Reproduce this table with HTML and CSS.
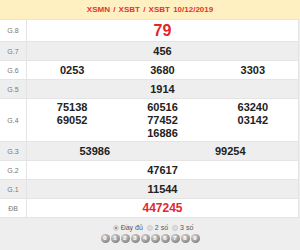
FILE: index.html
```html
<!DOCTYPE html>
<html>
<head>
<meta charset="utf-8">
<link rel="stylesheet" href="styles.css">
</head>
<body>
<div class="box">
  <div class="head">XSMN / XSBT / XSBT 10/12/2019</div>
  <table class="kq">
    <tr class="r8"><th>G.8</th><td><div class="cells"><span class="big red">79</span></div></td></tr>
    <tr class="alt"><th>G.7</th><td><div class="cells"><span>456</span></div></td></tr>
    <tr><th>G.6</th><td><div class="cells"><span>0253</span><span>3680</span><span>3303</span></div></td></tr>
    <tr class="alt"><th>G.5</th><td><div class="cells"><span>1914</span></div></td></tr>
    <tr class="r4"><th>G.4</th><td><div class="cells"><span class="col"><b>75138</b><b>69052</b></span><span class="col"><b>60516</b><b>77452</b><b>16886</b></span><span class="col"><b>63240</b><b>03142</b></span></div></td></tr>
    <tr class="alt"><th>G.3</th><td><div class="cells"><span>53986</span><span>99254</span></div></td></tr>
    <tr><th>G.2</th><td><div class="cells"><span>47617</span></div></td></tr>
    <tr class="alt"><th>G.1</th><td><div class="cells"><span>11544</span></div></td></tr>
    <tr class="db"><th>ĐB</th><td><div class="cells"><span class="red">447245</span></div></td></tr>
  </table>
  <div class="foot">
    <div class="opts">
      <label><i class="radio on"></i>Đầy đủ</label>
      <label><i class="radio"></i>2 số</label>
      <label><i class="radio"></i>3 số</label>
    </div>
    <div class="balls">
      <i>0</i><i>1</i><i>2</i><i>3</i><i>4</i><i>5</i><i>6</i><i>7</i><i>8</i><i>9</i>
    </div>
  </div>
</div>
</body>
</html>
```

FILE: styles.css
```css
html, body {
  margin: 0;
  padding: 0;
  background: #fff;
}
body {
  font-family: "Liberation Sans", Arial, sans-serif;
  width: 300px;
  height: 250px;
  overflow: hidden;
}
.box {
  width: 300px;
  background: #eeeeee;
  height: 250px;
}
.head {
  height: 19px;
  line-height: 19px;
  background: #fff0c2;
  color: #e0362c;
  font-size: 8px;
  font-weight: bold;
  text-align: center;
  word-spacing: 1px;
}
.kq {
  width: 299px;
  border-collapse: collapse;
  table-layout: fixed;
  background: #fff;
}
.kq th, .kq td {
  border: 1px solid #e4e4e4;
  padding: 0;
  height: 18px;
}
.kq th {
  width: 26px;
  font-weight: normal;
  font-size: 7px;
  color: #777;
  text-align: center;
  border-left: none;
}
.kq tr.alt th, .kq tr.alt td {
  background: #eeeeee;
}
.kq tr.r8 th, .kq tr.r8 td {
  height: 21px;
}
.kq tr.r4 td, .kq tr.r4 th {
  height: 42px;
}
.cells {
  display: flex;
  align-items: flex-start;
  font-size: 11px;
  font-weight: bold;
  color: #222;
}
.cells > span {
  flex: 1;
  text-align: center;
}
.col {
  display: flex;
  flex-direction: column;
  line-height: 13px;
}
.col b {
  font-weight: bold;
}
.big {
  font-size: 16px;
}
.red {
  color: #e3262a;
}
.db .red {
  font-size: 12px;
}
.foot {
  padding-top: 5px;
  display: flex;
  flex-direction: column;
  align-items: center;
  gap: 2px;
}
.opts {
  display: flex;
  gap: 4px;
  font-size: 7px;
  color: #555;
  line-height: 9px;
  margin-left: 6px;
}
.opts label {
  display: flex;
  align-items: center;
  gap: 2px;
}
.radio {
  width: 6px;
  height: 6px;
  border-radius: 50%;
  background: #ddd;
  border: 1px solid #ccc;
  box-sizing: border-box;
  position: relative;
}
.radio.on::after {
  content: "";
  position: absolute;
  left: 1px;
  top: 1px;
  width: 2px;
  height: 2px;
  border-radius: 50%;
  background: #777;
}
.balls {
  display: flex;
  gap: 1px;
}
.balls i {
  font-style: normal;
  width: 9px;
  height: 9px;
  border-radius: 50%;
  background: radial-gradient(circle at 35% 30%, #d8d8d8, #8a8a8a 70%, #6e6e6e);
  color: #fff;
  font-size: 6px;
  font-weight: bold;
  line-height: 9px;
  text-align: center;
}
```
